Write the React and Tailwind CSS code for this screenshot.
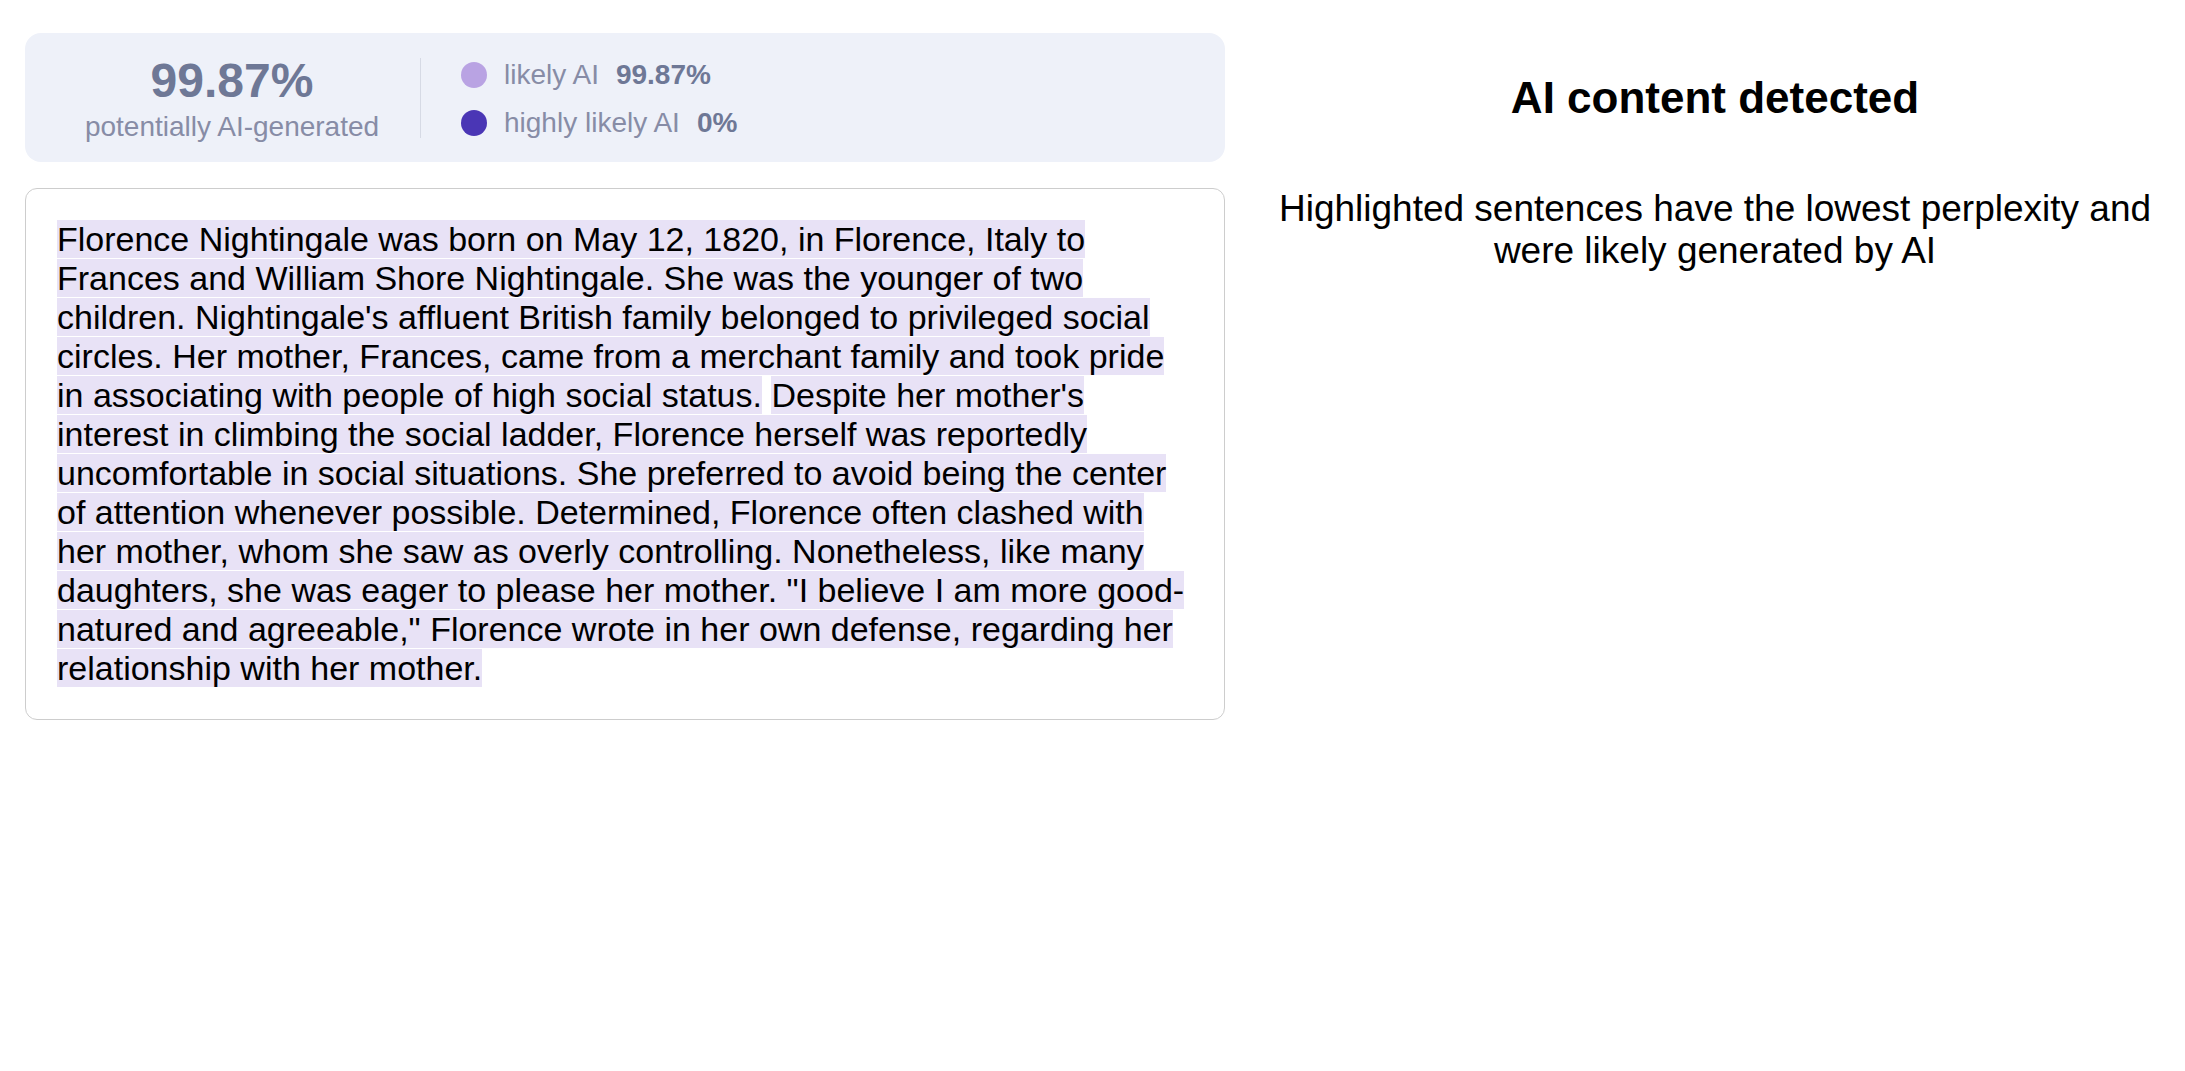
import React from "react";

const sentencesA =
  "Florence Nightingale was born on May 12, 1820, in Florence, Italy to Frances and William Shore Nightingale. She was the younger of two children. Nightingale's affluent British family belonged to privileged social circles. Her mother, Frances, came from a merchant family and took pride in associating with people of high social status.";
const sentencesB =
  "Despite her mother's interest in climbing the social ladder, Florence herself was reportedly uncomfortable in social situations. She preferred to avoid being the center of attention whenever possible. Determined, Florence often clashed with her mother, whom she saw as overly controlling. Nonetheless, like many daughters, she was eager to please her mother. \"I believe I am more good-natured and agreeable,\" Florence wrote in her own defense, regarding her relationship with her mother.";

function Legend({ dot, label, value }) {
  return (
    <div className="flex items-center h-[32px]">
      <span className={`w-[26px] h-[26px] rounded-full shrink-0 ${dot}`} />
      <span className="ml-[17px] text-[28px] leading-[normal] text-[#878ca6]">{label}</span>
      <span className="ml-[17px] text-[28px] leading-[normal] font-bold text-[#6e7896]">{value}</span>
    </div>
  );
}

export default function App() {
  return (
    <div className="min-h-screen bg-white font-['Liberation_Sans',Arial,sans-serif] flex items-start pt-[33px] pl-[25px]">
      {/* left: score + text */}
      <div className="w-[1200px] flex flex-col gap-[26px] shrink-0">
        <div className="h-[129px] bg-[#eef1f9] rounded-[16px] flex items-center pl-[19px]">
          <div className="w-[376px] flex flex-col items-center gap-[3px]">
            <div className="text-[48px] leading-[normal] font-bold text-[#6e7896]">99.87%</div>
            <div className="text-[28px] leading-[normal] text-[#878ca6]">potentially AI-generated</div>
          </div>
          <div className="w-px h-[80px] bg-[#d6dae5]" />
          <div className="ml-[40px] mt-[2px] flex flex-col gap-[16px]">
            <Legend dot="bg-[#b9a3e3]" label="likely AI" value="99.87%" />
            <Legend dot="bg-[#4a36b5]" label="highly likely AI" value="0%" />
          </div>
        </div>

        <div className="border border-[#cdcdcd] rounded-[12px] p-[31px] text-[34px] leading-[normal] text-black">
          <span className="bg-[#e8e2f6]">{sentencesA}</span>{" "}
          <span className="bg-[#e8e2f6]">{sentencesB}</span>
        </div>
      </div>

      {/* right: verdict */}
      <div className="flex-1 ml-[20px] text-center text-black">
        <h1 className="mt-[40px] text-[44px] leading-[normal] font-bold">AI content detected</h1>
        <p className="mt-[65px] text-[37px] leading-[normal]">
          Highlighted sentences have the lowest perplexity and were likely generated by AI
        </p>
      </div>
    </div>
  );
}
